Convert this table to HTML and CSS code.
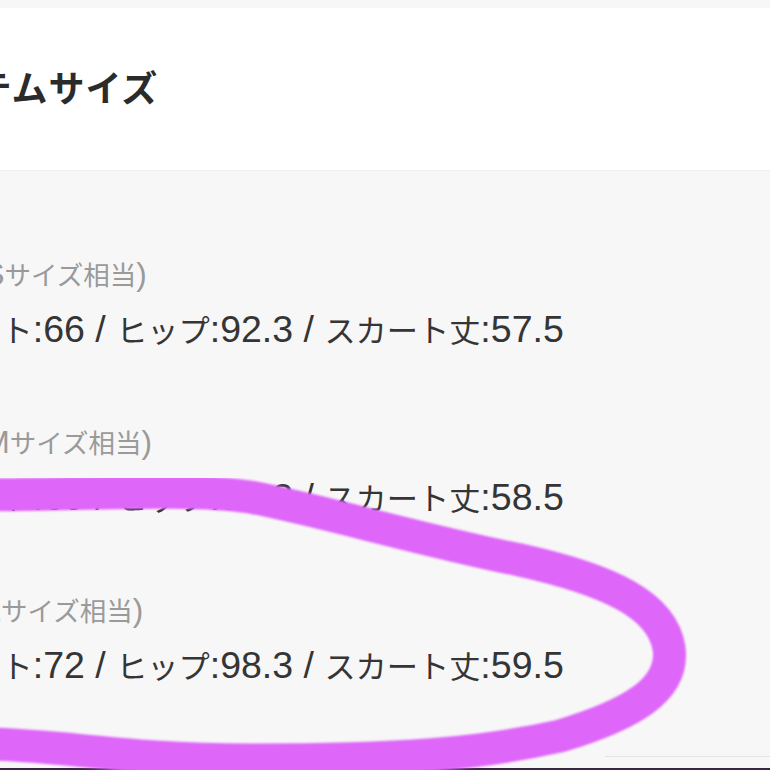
FILE: index.html
```html
<!DOCTYPE html>
<html lang="ja">
<head>
<meta charset="utf-8">
<title>アイテムサイズ</title>
<link rel="stylesheet" href="styles.css">
</head>
<body>
<div class="page">
  <div class="topstrip"></div>
  <header class="header">
    <h2 class="title">アイテムサイズ</h2>
  </header>
  <section class="sizes">
    <div class="group">
      <div class="label"><span class="lat">(S</span>サイズ相当<span class="lat">)</span></div>
      <div class="value">ウエスト<span class="num">:66 / </span>ヒップ<span class="num">:92.3 / </span>スカート丈<span class="num">:57.5</span></div>
    </div>
    <div class="group">
      <div class="label"><span class="lat">(M</span>サイズ相当<span class="lat">)</span></div>
      <div class="value">ウエスト<span class="num">:69 / </span>ヒップ<span class="num">:95.3 / </span>スカート丈<span class="num">:58.5</span></div>
    </div>
    <div class="group">
      <div class="label"><span class="lat">(L</span>サイズ相当<span class="lat">)</span></div>
      <div class="value">ウエスト<span class="num">:72 / </span>ヒップ<span class="num">:98.3 / </span>スカート丈<span class="num">:59.5</span></div>
    </div>
    <div class="divider"></div>
  </section>
  <div class="bottomedge"></div>
  <svg class="marker" width="770" height="770" viewBox="0 0 770 770">
    <defs>
      <filter id="soft" x="-5%" y="-5%" width="110%" height="110%">
        <feGaussianBlur stdDeviation="1.2"/>
      </filter>
    </defs>
    <path d="M -20 495 C 100 494, 190 488, 250 497 C 320 510, 420 540, 520 560 C 610 580, 662 605, 669 648 C 675 690, 630 715, 560 736 C 480 754, 400 760, 250 760 C 120 760, 60 744, -20 744" fill="none" stroke="#de66f9" stroke-width="33" stroke-linecap="round" stroke-linejoin="round" filter="url(#soft)"/>
  </svg>
</div>
</body>
</html>
```

FILE: styles.css
```css
html, body {
  margin: 0;
  padding: 0;
}
body {
  width: 770px;
  height: 770px;
  overflow: hidden;
  background: #f7f7f7;
  font-family: "Noto Sans CJK JP", "Noto Sans", sans-serif;
  color: #333;
}
.page {
  position: relative;
  width: 770px;
  height: 770px;
  overflow: hidden;
  display: flex;
  flex-direction: column;
}
.topstrip {
  height: 8px;
  background: #f7f7f7;
  flex: none;
}
.header {
  background: #fff;
  height: 162px;
  flex: none;
  display: flex;
  align-items: center;
  border-bottom: 1px solid #efefef;
  box-shadow: 0 1px 2px rgba(0,0,0,0.03);
}
.title {
  margin: 0 0 0 -96px;
  font-size: 36px;
  font-weight: 700;
  color: #2b2b2b;
  letter-spacing: 1px;
  line-height: 1;
  padding-bottom: 7px;
  white-space: nowrap;
}
.sizes {
  flex: 1;
  background: #f7f7f7;
  display: flex;
  flex-direction: column;
  padding-top: 86px;
}
.group {
  height: 168px;
  display: flex;
  flex-direction: column;
}
.label {
  font-size: 26.5px;
  color: #9a9a9a;
  line-height: 34px;
  height: 34px;
  margin-left: -27px;
  white-space: nowrap;
}
.lat {
  font-family: "Liberation Sans", "Noto Sans", sans-serif;
  font-size: 31.5px;
  line-height: 1;
}
.value {
  font-size: 31.2px;
  color: #353535;
  line-height: 40px;
  height: 40px;
  margin-top: 18px;
  margin-left: -92px;
  white-space: nowrap;
}
.num {
  font-family: "Liberation Sans", "Noto Sans", sans-serif;
  font-size: 37.5px;
  line-height: 1;
}
.divider {
  position: absolute;
  left: 605px;
  right: 0;
  top: 756px;
  height: 1px;
  background: #e4e4e4;
}
.bottomedge {
  position: absolute;
  left: 0;
  right: 0;
  bottom: 0;
  height: 2px;
  background: #3a2640;
}
.marker {
  position: absolute;
  left: 0;
  top: 0;
  pointer-events: none;
}
```
